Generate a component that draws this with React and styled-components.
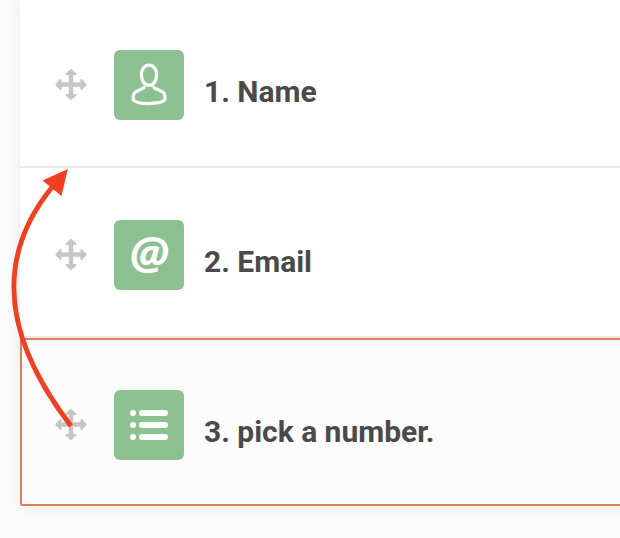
import React from "react";
import styled, { createGlobalStyle } from "styled-components";

const GlobalStyle = createGlobalStyle`
  * { box-sizing: border-box; }
  body { margin: 0; background: #fafafa; overflow: hidden; }
`;

const Page = styled.main`
  position: relative;
  height: 538px;
  padding-left: 20px;
  overflow: hidden;
  background: #fafafa;
  font-family: Roboto, "Liberation Sans", sans-serif;
`;

const QuestionList = styled.ol`
  width: 640px;
  margin: 0;
  padding: 0;
  list-style: none;
  background: #fff;
  box-shadow: 0 2px 12px rgba(0, 0, 0, 0.06);
`;

const QuestionRow = styled.li`
  display: flex;
  align-items: flex-start;
  height: ${(p) => (p.$first || p.$selected ? 168 : 170)}px;
  padding: ${(p) => (p.$first || p.$selected ? 50 : 52)}px 0 0 ${(p) => (p.$selected ? 33 : 35)}px;
  border: 0 solid #e9e9e9;
  border-bottom-width: 2px;
  ${(p) =>
    p.$selected &&
    `
    background: #fcfcfc;
    border: 2px solid #dc8056;
    border-radius: 2px;
  `}
`;

const DragHandle = styled.span`
  display: flex;
  margin-top: 18px;
`;

const IconTile = styled.span`
  display: flex;
  align-items: center;
  justify-content: center;
  width: 70px;
  height: 70px;
  margin-left: 27px;
  border-radius: 6px;
  background: #8dc191;
  color: #fff;
`;

const AtSign = styled.span`
  height: 70px;
  font: italic 700 45.5px/63px "Open Sans", sans-serif;
`;

const Title = styled.span`
  margin: 24px 0 0 20px;
  color: #4a4a4a;
  font-size: 30px;
  font-weight: 700;
  line-height: 35px;
  letter-spacing: -0.02px;
  white-space: nowrap;
`;

const ReorderArrow = styled.svg`
  position: absolute;
  left: 0;
  top: 160px;
`;

const MoveIcon = () => (
  <svg width="32" height="33" viewBox="-16 -16.5 32 33" fill="#c6c6c6" stroke="#c6c6c6" strokeLinejoin="round">
    <path d="M0-10V10M-10 0H10" strokeWidth="4.4" />
    {[0, 90, 180, 270].map((angle) => (
      <path key={angle} d="M0-14.6L4.5-10.4H-4.5Z" strokeWidth="2" transform={`rotate(${angle})`} />
    ))}
  </svg>
);

const PersonIcon = () => (
  <svg width="70" height="70" viewBox="0 0 70 70" fill="none" stroke="#fff" strokeWidth="3.3" strokeLinecap="round" strokeLinejoin="round">
    <path d="M35 15.2C30.2 15.2 27.4 19.2 27.4 24.8C27.4 31.2 30.8 35.2 35 35.2S42.6 31.2 42.6 24.8C42.6 19.2 39.8 15.2 35 15.2Z" />
    <path d="M30 37.4C27 40 21.8 40.6 20 43.7C19.2 45.4 19 48 19.3 49.7C23.5 54.8 46.5 54.8 50.9 49.7C51.2 48 51 45.4 50.2 43.7C48.4 40.6 43 40 40 37.4" />
  </svg>
);

const ListIcon = () => (
  <svg width="70" height="70" viewBox="0 0 70 70" fill="#fff">
    {[20, 32, 44].map((y) => (
      <g key={y}>
        <circle cx="19" cy={y + 3} r="3" />
        <rect x="25" y={y} width="29" height="6" rx="3" />
      </g>
    ))}
  </svg>
);

const questions = [
  { title: "1. Name", icon: <PersonIcon /> },
  { title: "2. Email", icon: <AtSign>@</AtSign> },
  { title: "3. pick a number.", icon: <ListIcon />, selected: true },
];

export default function App() {
  return (
    <Page>
      <GlobalStyle />
      <QuestionList>
        {questions.map((q, i) => (
          <QuestionRow key={q.title} $first={i === 0} $selected={q.selected}>
            <DragHandle><MoveIcon /></DragHandle>
            <IconTile>{q.icon}</IconTile>
            <Title>{q.title}</Title>
          </QuestionRow>
        ))}
      </QuestionList>
      <ReorderArrow width="100" height="280" viewBox="0 160 100 280">
        <path d="M71 426C18 357 -17 271 53 186" fill="none" stroke="#ef4024" strokeWidth="5" />
        <path d="M67.8 169L42.5 180.5L61.5 196Z" fill="#ef4024" />
      </ReorderArrow>
    </Page>
  );
}
